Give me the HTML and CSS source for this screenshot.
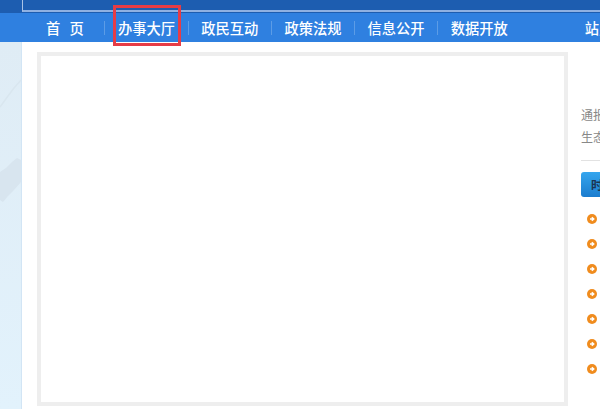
FILE: index.html
```html
<!DOCTYPE html>
<html lang="zh-CN">
<head>
<meta charset="utf-8">
<title>办事大厅</title>
<link rel="stylesheet" href="styles.css">
</head>
<body>
<header class="topbar"><div class="topbar-inner"></div></header>
<nav class="nav">
  <a class="nav-item home">首&nbsp;页</a>
  <i class="sep"></i>
  <a class="nav-item active">办事大厅</a>
  <i class="sep"></i>
  <a class="nav-item">政民互动</a>
  <i class="sep"></i>
  <a class="nav-item">政策法规</a>
  <i class="sep"></i>
  <a class="nav-item">信息公开</a>
  <i class="sep"></i>
  <a class="nav-item">数据开放</a>
  <a class="nav-item last">站点地图</a>
</nav>
<div class="page">
  <aside class="bg-side">
    <svg class="map" width="22" height="160" viewBox="0 0 22 160" aria-hidden="true">
      <path d="M0 55 L8 44 L14 36 L21 28" fill="none" stroke="#d9e6ef" stroke-width="1.5"/>
      <path d="M0 120 L6 116 L12 110 L17 106 L21 108 L21 130 L14 138 L8 144 L3 150 L0 148 Z" fill="#d8e5ef"/>
    </svg>
  </aside>
  <main class="content">
    <section class="frame"></section>
    <section class="side">
      <p class="intro">通报信息<br>生态环境</p>
      <h2 class="tab"><span>时效公开</span></h2>
      <ul class="list">
        <li><svg class="dot" viewBox="0 0 10 10"><circle cx="5" cy="5" r="5" fill="#f08c1e"/><path d="M3 5h3.6M4.8 3.2 6.8 5 4.8 6.8" fill="none" stroke="#fff" stroke-width="1.4"/></svg></li>
        <li><svg class="dot" viewBox="0 0 10 10"><circle cx="5" cy="5" r="5" fill="#f08c1e"/><path d="M3 5h3.6M4.8 3.2 6.8 5 4.8 6.8" fill="none" stroke="#fff" stroke-width="1.4"/></svg></li>
        <li><svg class="dot" viewBox="0 0 10 10"><circle cx="5" cy="5" r="5" fill="#f08c1e"/><path d="M3 5h3.6M4.8 3.2 6.8 5 4.8 6.8" fill="none" stroke="#fff" stroke-width="1.4"/></svg></li>
        <li><svg class="dot" viewBox="0 0 10 10"><circle cx="5" cy="5" r="5" fill="#f08c1e"/><path d="M3 5h3.6M4.8 3.2 6.8 5 4.8 6.8" fill="none" stroke="#fff" stroke-width="1.4"/></svg></li>
        <li><svg class="dot" viewBox="0 0 10 10"><circle cx="5" cy="5" r="5" fill="#f08c1e"/><path d="M3 5h3.6M4.8 3.2 6.8 5 4.8 6.8" fill="none" stroke="#fff" stroke-width="1.4"/></svg></li>
        <li><svg class="dot" viewBox="0 0 10 10"><circle cx="5" cy="5" r="5" fill="#f08c1e"/><path d="M3 5h3.6M4.8 3.2 6.8 5 4.8 6.8" fill="none" stroke="#fff" stroke-width="1.4"/></svg></li>
        <li><svg class="dot" viewBox="0 0 10 10"><circle cx="5" cy="5" r="5" fill="#f08c1e"/><path d="M3 5h3.6M4.8 3.2 6.8 5 4.8 6.8" fill="none" stroke="#fff" stroke-width="1.4"/></svg></li>
      </ul>
    </section>
  </main>
</div>
</body>
</html>
```
FILE: styles.css
```css
html, body { margin: 0; padding: 0; }
body { width: 600px; height: 409px; overflow: hidden; background: #fff; font-family: "Noto Sans CJK SC", sans-serif; }
.topbar { height: 13px; background: #1d5db0; padding-left: 22px; box-sizing: border-box; }
.topbar-inner { height: 12px; border-left: 1px solid #a9c3e6; border-bottom: 2px solid #8fb1e2; box-sizing: border-box; }
.nav { height: 29px; background: #2f80e0; display: flex; align-items: center; padding-left: 46px; box-sizing: border-box; white-space: nowrap; }
.nav-item { color: #fff; font: 500 14.25px/20px "Noto Sans CJK SC", sans-serif; flex: none; width: 57px; position: relative; }
.home { width: 35px; word-spacing: 6px; margin-right: 23px; }
.sep { width: 1px; height: 14px; background: #5c9ce6; flex: none; margin: 0 12.6px; }
.home + .sep { margin-left: 0; margin-right: 13px; }
.last { margin-left: 77px; }
.active::after { content: ""; position: absolute; left: -5px; right: -6px; top: -13px; bottom: -8px; border: 3px solid #e63c46; box-sizing: border-box; }
.page { display: flex; height: 367px; }
.bg-side { width: 22px; background: linear-gradient(#dfecf5, #e2f2fc); border-right: 1px solid #d2e5f5; box-sizing: border-box; flex: none; }
.map { display: block; margin-top: 10px; }
.content { display: flex; flex: 1; padding: 10px 0 0 15px; min-width: 0; }
.frame { width: 531px; height: 354px; box-sizing: border-box; border: 4px solid #eeeeee; flex: none; }
.side { margin-left: 13px; flex: 1; overflow: hidden; }
.intro { margin: 52px 0 0; font: 12px/22px "Noto Sans CJK SC", sans-serif; color: #888; white-space: nowrap; border-bottom: 1px solid #e2e2e2; padding-bottom: 12px; width: 200px; }
.tab { margin: 11px 0 0; width: 100px; height: 25px; background: linear-gradient(#35a6ee, #1b7cce); border-radius: 3px 0 0 3px; font: bold 12px/25px "Noto Sans CJK SC", sans-serif; color: #1c3350; padding-left: 10px; white-space: nowrap; }
.list { list-style: none; margin: 10px 0 0; padding: 0; }
.list li { height: 24.9px; display: flex; align-items: center; padding-left: 6px; }
.dot { width: 10px; height: 10px; display: block; }
```
